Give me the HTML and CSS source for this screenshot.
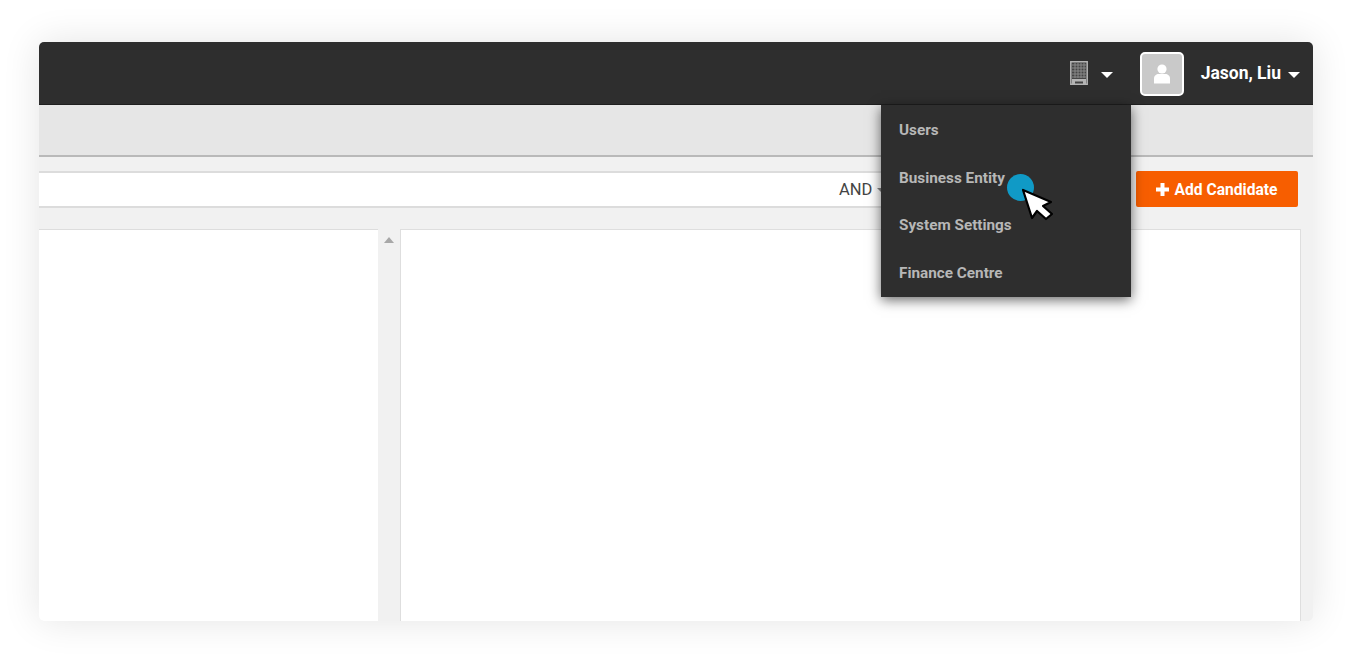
FILE: index.html
```html
<!DOCTYPE html>
<html lang="en">
<head>
<meta charset="utf-8">
<title>Jason, Liu</title>
<link rel="stylesheet" href="styles.css">
</head>
<body>
<div class="window">
  <header class="topbar">
    <svg class="building" viewBox="0 0 18 24" width="18" height="24" aria-hidden="true">
      <path fill="#454545" stroke="#b4b4b4" stroke-width="1.500" d="M.8.8h16.400v22.400H.8z"/>
      <path fill="none" stroke="#8a8a8a" stroke-width="1" d="M2 4h14M2 7h14M2 10h14M2 13h14M2 16h14M5 2v15M8 2v15M11 2v15M14 2v15"/>
      <path fill="#b4b4b4" d="M2 18h14v5.500h-3v-3H5v3H2z"/>
    </svg>
    <span class="caret building-caret"></span>
    <span class="avatar">
      <svg viewBox="0 0 18 20" width="18" height="20" aria-hidden="true">
        <circle cx="9" cy="5" r="4.600" fill="#fff"/>
        <path fill="#fff" d="M1 19.500v-5C1 11.500 3.500 10 5.500 10h7c2 0 4.500 1.500 4.500 4.500v5z"/>
      </svg>
    </span>
    <span class="username">Jason, Liu</span>
    <span class="caret"></span>
  </header>
  <div class="subbar"></div>
  <div class="toolbar">
    <div class="search"><span class="and">AND</span><span class="small-caret"></span></div>
    <button class="add" type="button">
      <svg viewBox="0 0 13 13" width="13" height="13" aria-hidden="true"><path fill="#fff" d="M4.500 0h4v4.500H13v4H8.500V13h-4V8.500H0v-4h4.500z"/></svg>
      <span class="add-label">Add Candidate</span>
    </button>
  </div>
  <div class="panels">
    <div class="left-panel"></div>
    <div class="scroll"><span class="scroll-up"></span></div>
    <div class="right-panel"></div>
  </div>
  <nav class="menu">
    <a>Users</a>
    <a>Business Entity</a>
    <a>System Settings</a>
    <a>Finance Centre</a>
  </nav>
  <span class="click-dot"></span>
  <svg class="cursor" viewBox="0 0 34 36" width="34" height="36" aria-hidden="true">
    <path fill="#fff" stroke="#000" stroke-width="2.200" stroke-linejoin="round" d="M2 2l9 28 5-7 9 8 6-5-9-8 8-4z"/>
  </svg>
</div>
</body>
</html>
```
FILE: styles.css
```css
* { box-sizing: border-box; }
html, body { margin: 0; height: 100%; background: #fff; overflow: hidden; }
body { padding: 42px 37px 38px 39px; font-family: Roboto, "Liberation Sans", sans-serif; }

.window {
  position: relative;
  height: 579px;
  display: flex;
  flex-direction: column;
  background: #f1f1f1;
  border-radius: 5px;
  box-shadow: 0 0 38px rgba(0, 0, 0, .11);
  overflow: hidden;
}

.topbar {
  flex: 0 0 63px;
  display: flex;
  align-items: center;
  justify-content: flex-end;
  padding: 0 13px 0 0;
  background: #2e2e2e;
  border-bottom: 1px solid #1f1f1f;
  color: #fff;
}
.building { margin-right: 13px; }
.caret {
  width: 0;
  height: 0;
  margin-top: 4px;
  border-left: 6px solid transparent;
  border-right: 6px solid transparent;
  border-top: 6px solid #fff;
}
.building-caret { margin-right: 27px; }
.avatar {
  width: 44px;
  height: 44px;
  margin-top: 2px;
  margin-right: 17px;
  display: flex;
  align-items: center;
  justify-content: center;
  background: #c9c9c9;
  border: 2px solid #fff;
  border-radius: 5px;
}
.username { font-size: 17.500px; font-weight: 700; margin-right: 7px; }

.subbar {
  flex: 0 0 52px;
  background: #e6e6e6;
  border-bottom: 2px solid #b9b9b9;
}

.toolbar {
  display: flex;
  align-items: flex-start;
  padding: 14px 15px 0 0;
  height: 50px;
  flex: 0 0 50px;
}
.search {
  flex: 0 0 1090px;
  height: 37px;
  display: flex;
  align-items: center;
  padding-left: 800px;
  background: #fff;
  border-top: 2px solid #dcdcdc;
  border-bottom: 2px solid #dcdcdc;
  font-size: 16.500px;
  color: #444;
}
.small-caret {
  width: 0;
  height: 0;
  margin-left: 5px;
  border-left: 4px solid transparent;
  border-right: 4px solid transparent;
  border-top: 4px solid #888;
}
.add {
  margin-left: 7px;
  flex: 1;
  height: 36px;
  border: 0;
  border-radius: 2px;
  background: #f75e00;
  color: #fff;
  font: 700 15.600px Roboto, "Liberation Sans", sans-serif;
  padding: 0 1px 0 0;
  display: flex;
  align-items: center;
  justify-content: center;
  gap: 6px;
}
.add-label { margin-top: 1px; }

.panels {
  flex: 1;
  display: flex;
  padding: 22px 12px 0 0;
  min-height: 0;
}
.left-panel { flex: 0 0 339px; background: #fff; border-top: 1px solid #ddd; }
.scroll { flex: 0 0 22px; display: flex; justify-content: center; padding-top: 8px; }
.scroll-up {
  width: 0;
  height: 0;
  border-left: 5px solid transparent;
  border-right: 5px solid transparent;
  border-bottom: 6px solid #a8a8a8;
}
.right-panel { flex: 1; background: #fff; border: 1px solid #dedede; border-bottom: 0; }

.menu {
  position: absolute;
  left: 842px;
  top: 63px;
  width: 250px;
  height: 192px;
  display: flex;
  flex-direction: column;
  justify-content: space-between;
  padding: 13px 18px 12px;
  background: #2e2e2e;
  box-shadow: 0 3px 12px rgba(0, 0, 0, .6);
  color: #b7b7b7;
  font-size: 15.300px;
  font-weight: 700;
}
.menu a { display: block; line-height: 24px; }

.click-dot {
  position: absolute;
  left: 968px;
  top: 132px;
  width: 27px;
  height: 27px;
  border-radius: 50%;
  background: #109ac6;
}
.cursor { position: absolute; left: 982px; top: 146px; }
```
